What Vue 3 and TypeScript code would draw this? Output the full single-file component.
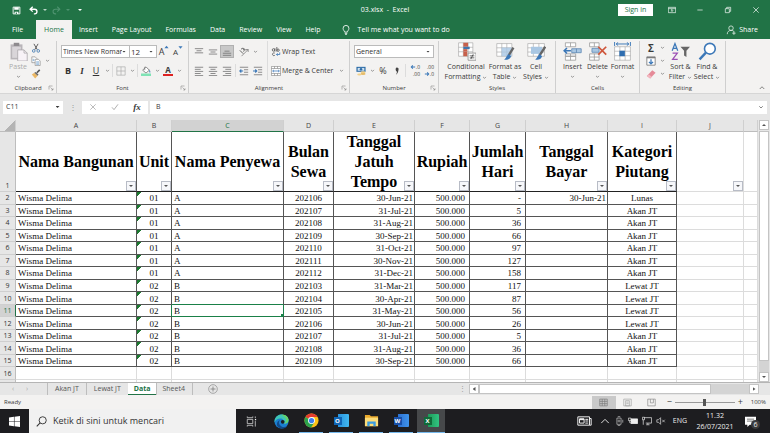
<script setup lang="ts">
import { ref } from 'vue'

interface Row { n: number; unit: string; tenant: string; month: string; due: string; days: string; paid: string; cat: string }

const raw: [string, string, string, string, string, string, string][] = [
  ['01', 'A', '202106', '30-Jun-21', '-', '30-Jun-21', 'Lunas'],
  ['01', 'A', '202107', '31-Jul-21', '5', '', 'Akan JT'],
  ['01', 'A', '202108', '31-Aug-21', '36', '', 'Akan JT'],
  ['01', 'A', '202109', '30-Sep-21', '66', '', 'Akan JT'],
  ['01', 'A', '202110', '31-Oct-21', '97', '', 'Akan JT'],
  ['01', 'A', '202111', '30-Nov-21', '127', '', 'Akan JT'],
  ['01', 'A', '202112', '31-Dec-21', '158', '', 'Akan JT'],
  ['02', 'B', '202103', '31-Mar-21', '117', '', 'Lewat JT'],
  ['02', 'B', '202104', '30-Apr-21', '87', '', 'Lewat JT'],
  ['02', 'B', '202105', '31-May-21', '56', '', 'Lewat JT'],
  ['02', 'B', '202106', '30-Jun-21', '26', '', 'Lewat JT'],
  ['02', 'B', '202107', '31-Jul-21', '5', '', 'Akan JT'],
  ['02', 'B', '202108', '31-Aug-21', '36', '', 'Akan JT'],
  ['02', 'B', '202109', '30-Sep-21', '66', '', 'Akan JT'],
]
const rows: Row[] = raw.map(([unit, tenant, month, due, days, paid, cat], i) => ({ n: i + 2, unit, tenant, month, due, days, paid, cat }))
const letters = ['A', 'B', 'C', 'D', 'E', 'F', 'G', 'H', 'I', 'J']
const titles = ['Nama Bangunan', 'Unit', 'Nama Penyewa', 'Bulan Sewa', 'Tanggal Jatuh Tempo', 'Rupiah', 'Jumlah Hari', 'Tanggal Bayar', 'Kategori Piutang', '']
const menu = ['File', 'Home', 'Insert', 'Page Layout', 'Formulas', 'Data', 'Review', 'View', 'Help']
const sheets = ['Akan JT', 'Lewat JT', 'Data', 'Sheet4']
const activeSheet = ref('Data')
const formula = ref('B')
const cellName = ref('C11')
const zoom = ref(50)

const lines = (ys: number[], a: number[][]) => ys.map((y, i) => `<path d="M${a[i][0]} ${y}H${a[i][1]}" stroke="#777" fill="none"/>`).join('')
const table = (x: number, y: number, w: number, h: number) =>
  `<path d="M${x} ${y}h${w}v${h}h${-w}zM${x + w / 3} ${y}v${h}M${x + (2 * w) / 3} ${y}v${h}M${x} ${y + h / 3}h${w}M${x} ${y + (2 * h) / 3}h${w}" fill="#fff" stroke="#999" stroke-width=".7"/>`

const icons: Record<string, string> = {
  save: '<path d="M1.5 1.5h9v9h-9z" fill="none" stroke="#fff" stroke-width="1.2"/><path d="M3 1.5h6v3.5H3zM3.5 7.5h5v3h-5z" fill="#fff"/><path d="M5 8.5h1.5v2H5z" fill="#217346"/>',
  undo: '<path d="M5 1L1.5 4.3L5 7.5M2 4.3h5.5a3 3 0 0 1 0 6.2H6.5" fill="none" stroke="#fff" stroke-width="1.8"/>',
  redo: '<path d="M7 1l3.5 3.3L7 7.5M10 4.3H4.5a3 3 0 0 0 0 6.2h1" fill="none" stroke="#4f9370" stroke-width="1.4"/>',
  bulb: '<path d="M4.3 8.5C4.3 7 2.5 6.3 2.5 4a3.5 3.5 0 0 1 7 0c0 2.3-1.8 3-1.8 4.5zM4.5 10h3M5 11.5h2" fill="none" stroke="#fff"/>',
  person: '<circle cx="6" cy="3.8" r="2.7" fill="none" stroke="#dcebe2"/><path d="M1.5 11c0-3 2-4.5 4.5-4.5S9 7 9.5 8M7.5 9.8h4M9.5 7.8v4" fill="none" stroke="#dcebe2"/>',
  ribbonopt: '<path d="M.5 2h11v8H.5zM.5 4h11" fill="none" stroke="#fff"/><path d="M6 9V5.5M4.3 7L6 5.3L7.7 7" fill="none" stroke="#fff"/>',
  minimize: '<path d="M2 6h8" stroke="#fff"/>',
  restore: '<path d="M2 4h6v6H2zM4 4V2h6v6H8" fill="none" stroke="#fff"/>',
  close: '<path d="M2 2l8 8M10 2l-8 8" stroke="#fff"/>',
  cut: '<path d="M3.5 1l4 7M8.5 1l-4 7" stroke="#555" fill="none" stroke-width="1.1"/><circle cx="3.3" cy="9.5" r="1.6" fill="none" stroke="#4279b0"/><circle cx="8.7" cy="9.5" r="1.6" fill="none" stroke="#4279b0"/>',
  copy: '<path d="M1 1h4l2 2v5H1z" fill="#fff" stroke="#888" stroke-width=".8"/><path d="M5 4h4l2 2v5.5H5z" fill="#fff" stroke="#888" stroke-width=".8"/><path d="M6.2 7h3.5M6.2 8.5h3.5M6.2 10h3.5M2 4h2M2 5.5h2" stroke="#4a86c0" stroke-width=".7"/>',
  brush: '<path d="M1 6.5l3-2L8 8l-3 3.5z" fill="#eab765"/><path d="M4 4.5l1.5-1L9 6.5L8 8z" fill="#666"/><path d="M7 4.5L10.5 1" stroke="#555" stroke-width="2"/>',
  borders: '<path d="M1 1h10v10H1zM6 1v10M1 6h10" fill="none" stroke="#aaa" stroke-width=".8"/>',
  fill: '<path d="M2 5l4-4l4 4l-4 3.5z" fill="#fff" stroke="#666" stroke-width=".9"/><path d="M4.5 1v4" stroke="#666" stroke-width=".8"/><path d="M10 4.5c1 1 1.6 2.5 .9 3.5c-1 0-1.2-1.5-.9-3.5z" fill="#3c78b8"/><path d="M0 9h12v3H0z" fill="#7fe3b5"/>',
  topA: lines([2, 4.5, 7], [[1, 11], [3, 9], [1, 11]]),
  midA: lines([3.5, 6, 8.5], [[1, 11], [3, 9], [1, 11]]),
  botA: lines([5, 7.5, 10], [[3, 9], [1, 11], [1, 11]]),
  left: lines([1.5, 4, 6.5, 9, 11.5], [[1, 11], [1, 8], [1, 11], [1, 8], [1, 11]]),
  center: lines([1.5, 4, 6.5, 9, 11.5], [[1, 11], [3, 9], [1, 11], [3, 9], [1, 11]]),
  right: lines([1.5, 4, 6.5, 9, 11.5], [[1, 11], [4, 11], [1, 11], [4, 11], [1, 11]]),
  orient: '<path d="M3 11L11 3M11 6V3H8" stroke="#777" fill="none" stroke-width=".9"/><path d="M1 4l4 4M2.5 2.5a1.8 1.8 0 0 1 3 3M5 1l3 3" stroke="#555" fill="none" stroke-width="1.1"/>',
  outdent: lines([1.5, 4.5, 7.5, 10.5], [[1, 11], [6, 11], [6, 11], [1, 11]]) + '<path d="M5 6H1M2.8 4.2L1 6l1.8 1.8" fill="none" stroke="#3c78b8" stroke-width="1.3"/>',
  indent: lines([1.5, 4.5, 7.5, 10.5], [[1, 11], [6, 11], [6, 11], [1, 11]]) + '<path d="M0 6h4M2.7 4.2L4.5 6L2.7 7.8" fill="none" stroke="#3c78b8" stroke-width="1.3"/>',
  wrap: '<circle cx="3" cy="3.5" r="1.5" fill="none" stroke="#555"/><path d="M4.7 1.5v4M7 0v5.5" stroke="#555"/><circle cx="8.5" cy="3.8" r="1.4" fill="none" stroke="#555"/><path d="M4.5 7.3a1.7 1.7 0 1 0 0 2.8" fill="none" stroke="#555"/><path d="M10.5 6.5v2.5H6.5M8 7.5L6.5 9L8 10.5" fill="none" stroke="#3c78b8"/>',
  merge: '<path d="M.5 .5h11v11H.5zM.5 3h11M.5 9h11M4.2 .5V3M7.8 .5V3M4.2 9v2.5M7.8 9v2.5" fill="#fff" stroke="#888" stroke-width=".8"/><path d="M2 6h8M3.5 4.7L2 6l1.5 1.3M8.5 4.7L10 6L8.5 7.3" fill="none" stroke="#3c78b8" stroke-width=".9"/>',
  money: '<path d="M.5 1h11v6H.5z" fill="#2f6ea8"/><path d="M2 2.3h8v3.4H2z" fill="#cfe0ef"/><circle cx="6" cy="4" r="1.5" fill="#2f6ea8"/><ellipse cx="8.5" cy="7.5" rx="3" ry="1.3" fill="#f3d28a"/><ellipse cx="8.5" cy="9.5" rx="3" ry="1.3" fill="#e6bd6c"/><ellipse cx="4" cy="10.3" rx="2.5" ry="1.2" fill="#f3d28a"/>',
  comma: '<path d="M4 2.5a2.3 2.3 0 1 1 4.2 1.8C8 7.5 7 10 4.5 11.5c1-1.8 1.5-3.2 1.3-4.7C4.5 6.3 3.8 4.5 4 2.5z" fill="#444"/>',
  paste: '<path d="M2 3h15v19H2z" fill="#b9b5b9"/><path d="M6 1h7v4H6z" fill="#8e8a8e"/><path d="M4 6h11v14H4z" fill="#d9d5d9"/><path d="M11 10h8l4 4v10H11z" fill="#f7f2f7" stroke="#aaa6aa"/><path d="M19 10v4h4" fill="none" stroke="#aaa6aa"/>',
  cond: table(2, 1, 18, 17) + '<path d="M8 1h6v5H8zM8 12h5v6H8z" fill="#c8604b"/><path d="M8 6h8v3H8z" fill="#3f75ad"/><path d="M8 9h5v3H8z" fill="#c8604b"/><path d="M14 14h10v9H14z" fill="#fff" stroke="#888"/><path d="M16 17.5h6M16 20h6M20.5 15.5l-3 6" stroke="#333" stroke-width=".9"/>',
  fmtTable: table(1, 2, 19, 16) + '<path d="M7 7h13v11H7z" fill="#a9c7e3" opacity=".8"/><path d="M22 7l-6 10" stroke="#666" stroke-width="3"/><path d="M16 15l3 3c-1 4-5 5-9 4c3-1 3-5 6-7z" fill="#3c78b8"/>',
  cellSt: table(1, 2, 21, 16) + '<path d="M5 6h14v9H5z" fill="#a9c7e3"/><path d="M23 6l-7 11" stroke="#666" stroke-width="3"/><path d="M16 15l3 3c-1 4-5 5-9 4c3-1 3-5 6-7z" fill="#3c78b8"/>',
  insert: '<path d="M3 1h13v5H3zM3 18h13v5H3zM9.5 1v5M9.5 18v5M3 15h13v3H3zM9.5 15v3" fill="#fff" stroke="#999"/><path d="M11 8.5h12v5H11zM17 8.5v5" fill="#a9c7e3" stroke="#5d87b3"/><path d="M10 11H2M5 7.5L1.5 11L5 14.5" fill="none" stroke="#3c78b8" stroke-width="2"/>',
  del: '<path d="M2 1h12v5H2zM2 15h12v8H2zM8 1v5M8 15v8M2 19h12" fill="#fff" stroke="#999"/><path d="M5 8h9v5H5z" fill="#a9c7e3" stroke="#5d87b3"/><path d="M13 6l10 10M23 6L13 16" stroke="#cf573c" stroke-width="2.2"/>',
  format: table(2, 6, 20, 17) + '<path d="M8 11h7v7H8z" fill="#2f6eb0"/><path d="M4 2.5h16M6.5 .5l-2.5 2l2.5 2M17.5 .5l2.5 2l-2.5 2M2 0v5M22 0v5" fill="none" stroke="#3c78b8" stroke-width="1.2"/>',
  filldown: '<path d="M1 1h10v10H1z" fill="#fff" stroke="#777"/><path d="M1 2h10" stroke="#777" stroke-width="1.5"/><path d="M6 4v5.5M3.5 7L6 9.5L8.5 7" fill="none" stroke="#3c78b8" stroke-width="1.5"/>',
  eraser: '<path d="M1 8.5L7.5 1.5L11.5 4.5L5 11.5z" fill="#e58a98"/><path d="M1 8.5l2-2.2L7 9.3L5 11.5z" fill="#f2b6bf"/>',
  sort: '<path d="M1.5 11L5 2l3.5 9M2.7 8h4.6" fill="none" stroke="#3c78b8" stroke-width="1.6"/><path d="M2 14h6l-6 8h6.5" fill="none" stroke="#9a4fb5" stroke-width="1.6"/><path d="M12 6h12l-4.5 5v8l-3-2v-6z" fill="#666"/>',
  find: '<circle cx="15" cy="8.5" r="6.8" fill="#fff" stroke="#3c78b8" stroke-width="2"/><path d="M10 13.5L2 22" stroke="#3c78b8" stroke-width="3"/>',
  decUp: '<path d="M5.5 3.5H1M2.8 1.7L1 3.5l1.8 1.8" fill="none" stroke="#3c78b8" stroke-width="1.2"/>',
  decDown: '<path d="M.5 3.5H5M3.2 1.7L5 3.5L3.2 5.3" fill="none" stroke="#3c78b8" stroke-width="1.2"/>',
  launcher: '<path d="M2 9V2h7M5 5l5 5M10 6.5V10H6.5" fill="none" stroke="#777"/>',
  cross: '<path d="M2 2l8 8M10 2l-8 8" stroke="#b0b0b0" stroke-width="1.3"/>',
  tick: '<path d="M1.5 6.5l3 3.5L10.5 2" fill="none" stroke="#b0b0b0" stroke-width="1.5"/>',
  chev: '<path d="M2.5 4.5L6 8l3.5-3.5" fill="none" stroke="#666" stroke-width="1.6"/>',
  chevUp: '<path d="M1.5 8L6 3.5L10.5 8" fill="none" stroke="#555" stroke-width="1.4"/>',
  plus: '<circle cx="6" cy="6" r="5.2" fill="none" stroke="#888" stroke-width=".8"/><path d="M6 3v6M3 6h6" stroke="#777" stroke-width=".9"/>',
  vNormal: '<path d="M1 1.5h10v9H1zM1 4.5h10M1 7.5h10M4.3 1.5v9M7.7 1.5v9" fill="none" stroke="#777" stroke-width=".9"/>',
  vPage: '<path d="M1 1.5h10v9H1zM3.5 3.5h5v7h-5zM4.5 5.5h3M4.5 7.5h3" fill="none" stroke="#999" stroke-width=".8"/>',
  vBreak: '<path d="M1 1.5h10v9H1zM4.5 1.5v5h4v-5" fill="none" stroke="#888" stroke-width=".9"/>',
  win: '<path d="M0 1.7L5.4 .9v4.800H0zM6 .8L12 0v5.700H6zM0 6.300h5.400v4.800L0 10.300zM6 6.300h6V12l-6-.8z" fill="#fff"/>',
  search: '<circle cx="7.3" cy="4.7" r="3.9" fill="none" stroke="#333"/><path d="M4.5 7.5L.8 11.3" stroke="#333" stroke-width="1.1"/>',
  taskview: '<path d="M1 4h6.5v5H1zM1 .5v1.5h6.5V.5M1 12.5V11h6.5v1.5M10.5 .5v2M10.5 6v6.5" fill="none" stroke="#ddd" stroke-width=".9"/><path d="M10 3.5h1.5v1.5H10z" fill="#fff"/>',
  edge: '<circle cx="8" cy="8" r="7.5" fill="#1b7fd0"/><path d="M.6 7C1.5 2.5 5 .5 8.3 .5c4.5 0 7.2 3 7.2 6c0 2.5-1.8 3.8-4 3.8c-1.6 0-2-.8-1.5-1.5c1-1.8-.5-4-3.3-4C4 4.8 1.5 6 .6 9z" fill="#3fc6b4"/><path d="M8.3 .5c4.5 0 7.2 3 7.2 6c0 2.5-1.8 3.8-4 3.8c3-3 1.5-7-3-9z" fill="#66d36a"/><path d="M6.5 6.5C4.5 8 5 12 8.5 13.5c2 .9 4 .3 5.5-.8c-2 3-6 3.5-9 1.8C2 12.5 2.5 8 6.5 6.5z" fill="#114a8b"/><circle cx="9.3" cy="8.3" r="2" fill="#1d1d20"/>',
  chrome: '<circle cx="8" cy="8" r="7.5" fill="#fbc116"/><path d="M8 8L1.5 4.3A7.5 7.5 0 0 1 14.5 4.3H8z" fill="#e33b2e"/><path d="M8 8L1.5 4.3A7.5 7.5 0 0 0 7.5 15.5L11.2 9.9z" fill="#2ba24c"/><circle cx="8" cy="8" r="3.7" fill="#fff"/><circle cx="8" cy="8" r="2.8" fill="#3b7ded"/>',
  explorer: '<path d="M1 2h5l1.5 1.5H15V14H1z" fill="#e9a92c"/><path d="M1 5h14v9H1z" fill="#fbdc79"/><path d="M3.5 14V9h9v5h-2.5v-2.5H6V14z" fill="#3a9be0"/>',
  news: '<path d="M1 1h14v10H1zM15 3h2v8h-2M3 3.5h5.5v5H3zM10 4h3.5M10 6h3.5M10 8.5h3.5" fill="none" stroke="#eee" stroke-width="1.2"/><path d="M3 3h5.5v2H3z" fill="#eee"/>',
  trayUp: '<path d="M1.5 8.5L6 4l4.5 4.5" fill="none" stroke="#ddd" stroke-width="1.2"/>',
  cam: '<path d="M3.5 2.5h5v7.5h-5zM4.5 .8h3M4.5 11.5h3M10.5 4.5v3.5" fill="none" stroke="#bbb" stroke-width=".9"/><circle cx="6" cy="6" r="1.2" fill="none" stroke="#bbb" stroke-width=".8"/>',
  battery: '<path d="M3.5 3.5h8v5.5h-8z" fill="#eee" stroke="#eee"/><path d="M.5 2.5h3v3h-3zM2 5.5V8h2" fill="#222" stroke="#eee" stroke-width=".8"/>',
  net: '<path d="M2.5 2h9v6.5h-7M7 8.5v2M5 10.5h4M.5 1.5h2.5v3H.5zM1.5 4.5v6" fill="none" stroke="#ddd" stroke-width=".9"/>',
  mute: '<path d="M1 4.5h2L5.5 2v8L3 7.5H1zM7.5 4.5l3 3M10.5 4.5l-3 3" fill="none" stroke="#ccc" stroke-width=".9"/>',
  note: '<path d="M0 1h14v10H6l-3 3v-3H0z" fill="#fff"/><path d="M2.5 4h9M2.5 6.5h9" stroke="#555"/>',
}
</script>

<template>
  <div class="app">
    <header class="titlebar">
      <div class="quick">
        <button aria-label="Save"><svg class="s9" viewBox="0 0 12 12" v-html="icons.save" /></button>
        <button aria-label="Undo"><svg class="s9" viewBox="0 0 12 12" v-html="icons.undo" /></button>
        <button class="mini" aria-label="Undo list"><i class="caret"></i></button>
        <button class="dim" aria-label="Redo"><svg class="s9" viewBox="0 0 12 12" v-html="icons.redo" /></button>
        <button class="mini dim" aria-label="Redo list"><i class="caret"></i></button>
        <button class="mini last" aria-label="Customize toolbar"><i class="caret"></i></button>
      </div>
      <div class="doc">03.xlsx&nbsp; - &nbsp;Excel</div>
      <div class="winctl">
        <button class="signin">Sign in</button>
        <button v-for="k in ['ribbonopt', 'minimize', 'restore', 'close']" :key="k" :aria-label="k"><svg class="s8" viewBox="0 0 12 12" v-html="icons[k]" /></button>
      </div>
    </header>

    <nav class="menu">
      <button v-for="m in menu" :key="m" :class="{ on: m === 'Home', file: m === 'File' }">{{ m }}</button>
      <button class="tell"><svg class="s10" viewBox="0 0 12 12" v-html="icons.bulb" />Tell me what you want to do</button>
      <button class="share"><svg class="s10" viewBox="0 0 12 12" v-html="icons.person" />Share</button>
    </nav>

    <section class="ribbon">
      <div class="group g-clip">
        <div class="body">
          <button class="big off"><svg class="s20" viewBox="0 0 24 24" v-html="icons.paste" /><span>Paste</span><svg class="s5" viewBox="0 0 12 12" v-html="icons.chev" /></button>
          <div class="stack">
            <div><button class="b" aria-label="Cut"><svg class="s10" viewBox="0 0 12 12" v-html="icons.cut" /></button></div>
            <div><button class="b" aria-label="Copy"><svg class="s10" viewBox="0 0 12 12" v-html="icons.copy" /></button><button class="cv" aria-label="Copy options"><svg class="s5" viewBox="0 0 12 12" v-html="icons.chev" /></button></div>
            <div><button class="b" aria-label="Format Painter"><svg class="s10" viewBox="0 0 12 12" v-html="icons.brush" /></button></div>
          </div>
        </div>
        <div class="label">Clipboard<button aria-label="Clipboard settings"><svg class="s6" viewBox="0 0 12 12" v-html="icons.launcher" /></button></div>
      </div>

      <div class="group g-font">
        <div class="body rows">
          <div class="row">
            <span class="sel font"><select aria-label="Font"><option>Times New Roman</option></select><i class="caret"></i></span>
            <span class="sel size"><select aria-label="Font size"><option>12</option></select><i class="caret"></i></span>
            <button class="b grow" aria-label="Increase font size">A<svg class="s5" viewBox="0 0 12 12"><path d="M1 8l5-6l5 6z" fill="#3c78b8" /></svg></button>
            <button class="b grow small" aria-label="Decrease font size">A<svg class="s5" viewBox="0 0 12 12"><path d="M1 3l5 6l5-6z" fill="#3c78b8" /></svg></button>
          </div>
          <div class="row">
            <button class="b txt"><b>B</b></button>
            <button class="b txt"><i>I</i></button>
            <button class="b txt"><u>U</u></button>
            <button class="cv" aria-label="Underline options"><svg class="s5" viewBox="0 0 12 12" v-html="icons.chev" /></button>
            <span class="sep"></span>
            <button class="b" aria-label="Borders"><svg class="s10" viewBox="0 0 12 12" v-html="icons.borders" /></button>
            <button class="cv" aria-label="Border options"><svg class="s5" viewBox="0 0 12 12" v-html="icons.chev" /></button>
            <span class="sep"></span>
            <button class="b" aria-label="Fill color"><svg class="s10" viewBox="0 0 12 12" v-html="icons.fill" /></button>
            <button class="cv" aria-label="Fill options"><svg class="s5" viewBox="0 0 12 12" v-html="icons.chev" /></button>
            <button class="b fc">A</button>
            <button class="cv" aria-label="Font color options"><svg class="s5" viewBox="0 0 12 12" v-html="icons.chev" /></button>
          </div>
        </div>
        <div class="label">Font<button aria-label="Font settings"><svg class="s6" viewBox="0 0 12 12" v-html="icons.launcher" /></button></div>
      </div>

      <div class="group g-align">
        <div class="body">
          <div class="rows alignleft">
            <div class="row">
              <button class="b" aria-label="Top align"><svg class="s10" viewBox="0 0 12 12" v-html="icons.topA" /></button>
              <button class="b" aria-label="Middle align"><svg class="s10" viewBox="0 0 12 12" v-html="icons.midA" /></button>
              <button class="b sel-on" aria-label="Bottom align"><svg class="s10" viewBox="0 0 12 12" v-html="icons.botA" /></button>
              <span class="sep clear"></span>
              <button class="b" aria-label="Orientation"><svg class="s10" viewBox="0 0 12 12" v-html="icons.orient" /></button>
              <button class="cv" aria-label="Orientation options"><svg class="s5" viewBox="0 0 12 12" v-html="icons.chev" /></button>
            </div>
            <div class="row">
              <button v-for="k in ['left', 'center', 'right']" :key="k" class="b" :aria-label="k"><svg class="s10" viewBox="0 0 12 12" v-html="icons[k]" /></button>
              <span class="sep"></span>
              <button v-for="k in ['outdent', 'indent']" :key="k" class="b" :aria-label="k"><svg class="s10" viewBox="0 0 12 12" v-html="icons[k]" /></button>
            </div>
          </div>
          <div class="rows alignright">
            <div class="row"><button class="lab"><svg class="s10" viewBox="0 0 12 12" v-html="icons.wrap" />Wrap Text</button></div>
            <div class="row"><button class="lab"><svg class="s10" viewBox="0 0 12 12" v-html="icons.merge" />Merge &amp; Center</button><button class="cv" aria-label="Merge options"><svg class="s5" viewBox="0 0 12 12" v-html="icons.chev" /></button></div>
          </div>
        </div>
        <div class="label">Alignment<button aria-label="Alignment settings"><svg class="s6" viewBox="0 0 12 12" v-html="icons.launcher" /></button></div>
      </div>

      <div class="group g-num">
        <div class="body rows">
          <div class="row"><span class="sel general"><select aria-label="Number format"><option>General</option></select><i class="caret"></i></span></div>
          <div class="row">
            <button class="b" aria-label="Accounting format"><svg class="s10" viewBox="0 0 12 12" v-html="icons.money" /></button>
            <button class="cv" aria-label="Currency options"><svg class="s5" viewBox="0 0 12 12" v-html="icons.chev" /></button>
            <button class="b pct">%</button>
            <button class="b" aria-label="Comma style"><svg class="s8" viewBox="0 0 12 12" v-html="icons.comma" /></button>
            <span class="sep"></span>
            <button class="dec"><span><svg class="s6" viewBox="0 0 6 7" v-html="icons.decUp" />.0</span><span>.00</span></button>
            <button class="dec"><span>.00</span><span><svg class="s6" viewBox="0 0 6 7" v-html="icons.decDown" />.0</span></button>
          </div>
        </div>
        <div class="label">Number<button aria-label="Number settings"><svg class="s6" viewBox="0 0 12 12" v-html="icons.launcher" /></button></div>
      </div>

      <div class="group g-styles">
        <div class="body">
          <button class="big w44"><svg class="s20" viewBox="0 0 24 24" v-html="icons.cond" /><span>Conditional</span><span>Formatting <svg class="s5" viewBox="0 0 12 12" v-html="icons.chev" /></span></button>
          <button class="big w34"><svg class="s20" viewBox="0 0 24 24" v-html="icons.fmtTable" /><span>Format as</span><span>Table <svg class="s5" viewBox="0 0 12 12" v-html="icons.chev" /></span></button>
          <button class="big w28"><svg class="s20" viewBox="0 0 24 24" v-html="icons.cellSt" /><span>Cell</span><span>Styles <svg class="s5" viewBox="0 0 12 12" v-html="icons.chev" /></span></button>
        </div>
        <div class="label">Styles</div>
      </div>

      <div class="group g-cells">
        <div class="body">
          <button class="big w25"><svg class="s20" viewBox="0 0 24 24" v-html="icons.insert" /><span>Insert</span><svg class="s5" viewBox="0 0 12 12" v-html="icons.chev" /></button>
          <button class="big w25"><svg class="s20" viewBox="0 0 24 24" v-html="icons.del" /><span>Delete</span><svg class="s5" viewBox="0 0 12 12" v-html="icons.chev" /></button>
          <button class="big w25"><svg class="s20" viewBox="0 0 24 24" v-html="icons.format" /><span>Format</span><svg class="s5" viewBox="0 0 12 12" v-html="icons.chev" /></button>
        </div>
        <div class="label">Cells</div>
      </div>

      <div class="group g-edit">
        <div class="body">
          <div class="stack">
            <div><button class="b sigma">Σ</button><button class="cv" aria-label="Sum options"><svg class="s5" viewBox="0 0 12 12" v-html="icons.chev" /></button></div>
            <div><button class="b" aria-label="Fill"><svg class="s10" viewBox="0 0 12 12" v-html="icons.filldown" /></button><button class="cv" aria-label="Fill options"><svg class="s5" viewBox="0 0 12 12" v-html="icons.chev" /></button></div>
            <div><button class="b" aria-label="Clear"><svg class="s10" viewBox="0 0 12 12" v-html="icons.eraser" /></button><button class="cv" aria-label="Clear options"><svg class="s5" viewBox="0 0 12 12" v-html="icons.chev" /></button></div>
          </div>
          <button class="big w25"><svg class="s20" viewBox="0 0 24 24" v-html="icons.sort" /><span>Sort &amp;</span><span>Filter <svg class="s5" viewBox="0 0 12 12" v-html="icons.chev" /></span></button>
          <button class="big w28"><svg class="s20" viewBox="0 0 24 24" v-html="icons.find" /><span>Find &amp;</span><span>Select <svg class="s5" viewBox="0 0 12 12" v-html="icons.chev" /></span></button>
        </div>
        <div class="label">Editing</div>
      </div>
      <button class="collapse" aria-label="Collapse ribbon"><svg class="s6" viewBox="0 0 12 12" v-html="icons.chevUp" /></button>
    </section>

    <section class="fbar">
      <span class="namebox"><input v-model="cellName" aria-label="Name box" /><button aria-label="Named ranges"><i class="caret"></i></button></span>
      <span class="dots">⋮</span>
      <span class="fbtns">
        <button aria-label="Cancel"><svg class="s8" viewBox="0 0 12 12" v-html="icons.cross" /></button>
        <button aria-label="Enter"><svg class="s8" viewBox="0 0 12 12" v-html="icons.tick" /></button>
        <button class="fx"><i>fx</i></button>
      </span>
      <span class="finput"><input v-model="formula" aria-label="Formula" /><button aria-label="Expand formula bar"><svg class="s6" viewBox="0 0 12 12" v-html="icons.chev" /></button></span>
    </section>

    <main class="work">
      <div class="grid">
        <table>
          <colgroup>
            <col class="c0" /><col v-for="l in letters" :key="l" :class="'c' + l" /><col />
          </colgroup>
          <thead>
            <tr class="letters">
              <th class="corner"></th>
              <th v-for="l in letters" :key="l" :class="{ cur: l === 'C' }">{{ l }}</th>
              <th></th>
            </tr>
          </thead>
          <tbody>
            <tr class="heads">
              <th class="rn">1</th>
              <td v-for="(t, i) in titles" :key="i" :class="{ plain: !t }">
                <div class="hc"><span>{{ t }}</span><button class="filter" aria-label="Filter"></button></div>
              </td>
              <td class="plain"></td>
            </tr>
            <tr v-for="r in rows" :key="r.n" class="data">
              <th class="rn" :class="{ cur: r.n === 11 }">{{ r.n }}</th>
              <td>Wisma Delima</td>
              <td class="c unit" :class="{ before: r.n === 11 }">{{ r.unit }}</td>
              <td :class="{ active: r.n === 11, above: r.n === 10 }">{{ r.tenant }}</td>
              <td class="c">{{ r.month }}</td>
              <td class="r">{{ r.due }}</td>
              <td class="r num">500.000</td>
              <td class="r num">{{ r.days }}</td>
              <td class="r">{{ r.paid }}</td>
              <td class="c">{{ r.cat }}</td>
              <td class="plain"></td>
              <td class="plain"></td>
            </tr>
            <tr class="data"><th class="rn">16</th><td v-for="i in 11" :key="i" class="plain"></td></tr>
            <tr class="rest"><th class="rn"></th><td v-for="i in 11" :key="i" class="plain"></td></tr>
          </tbody>
        </table>
      </div>
      <div class="vscroll"><button aria-label="Scroll up"><i class="caret up"></i></button><div class="thumb"></div><div class="track"></div><button aria-label="Scroll down"><i class="caret"></i></button></div>
    </main>

    <section class="tabs">
      <div class="nav"><button aria-label="Previous sheet">‹</button><button aria-label="Next sheet">›</button></div>
      <button v-for="s in sheets" :key="s" class="sheet" :class="{ on: s === activeSheet }" @click="activeSheet = s">{{ s }}</button>
      <button class="add" aria-label="New sheet"><svg class="s10" viewBox="0 0 12 12" v-html="icons.plus" /></button>
      <div class="hscroll"><span class="grip">⋮</span><button aria-label="Scroll left"><i class="caret lt"></i></button><div class="thumb"></div><div class="track"></div><button aria-label="Scroll right"><i class="caret rt"></i></button></div>
    </section>

    <footer class="status">
      <span class="ready">Ready</span>
      <button class="view on" aria-label="Normal view"><svg class="s9" viewBox="0 0 12 12" v-html="icons.vNormal" /></button>
      <button class="view" aria-label="Page layout view"><svg class="s9" viewBox="0 0 12 12" v-html="icons.vPage" /></button>
      <button class="view" aria-label="Page break view"><svg class="s9" viewBox="0 0 12 12" v-html="icons.vBreak" /></button>
      <button class="zb">−</button>
      <input v-model.number="zoom" type="range" min="0" max="100" aria-label="Zoom" />
      <button class="zb">+</button>
      <span class="pct">100%</span>
    </footer>

    <nav class="taskbar">
      <button class="start" aria-label="Start"><svg class="s11" viewBox="0 0 12 12" v-html="icons.win" /></button>
      <label class="find"><svg class="s11" viewBox="0 0 12 12" v-html="icons.search" /><input type="text" placeholder="Ketik di sini untuk mencari" aria-label="Ketik di sini untuk mencari" /></label>
      <button class="task" aria-label="Task view"><svg class="s11" viewBox="0 0 12 13" v-html="icons.taskview" /></button>
      <button class="task" aria-label="Edge"><svg class="s15" viewBox="0 0 16 16" v-html="icons.edge" /></button>
      <button class="task run" aria-label="Chrome"><svg class="s15" viewBox="0 0 16 16" v-html="icons.chrome" /></button>
      <button class="task run"><span class="office outlook"><b>O</b></span></button>
      <button class="task run" aria-label="File Explorer"><svg class="s15" viewBox="0 0 16 16" v-html="icons.explorer" /></button>
      <button class="task run"><span class="office word"><b>W</b></span></button>
      <button class="task run now"><span class="office excel"><b>X</b></span></button>
      <div class="tray">
        <button class="news" aria-label="News"><svg viewBox="0 0 18 12" v-html="icons.news" /></button>
        <button v-for="k in ['trayUp', 'cam', 'battery', 'net', 'mute']" :key="k" class="ti" :aria-label="k"><svg class="s10" viewBox="0 0 12 12" v-html="icons[k]" /></button>
        <span class="lang">ENG</span>
        <time class="clock"><span>11.32</span><span>26/07/2021</span></time>
        <button class="note" aria-label="Notifications"><svg class="s11" viewBox="0 0 14 14" v-html="icons.note" /><span class="badge">6</span></button>
      </div>
    </nav>
  </div>
</template>

<style>
body { margin: 0; }
</style>

<style scoped>
* { box-sizing: border-box; }
.app { display: flex; flex-direction: column; height: 100vh; min-height: 300px; overflow: hidden; background: #e6e6e6; color: #3a3a3a; font: 7px/10px "Open Sans", "Noto Sans", sans-serif; white-space: nowrap; }
button, input, select { margin: 0; padding: 0; border: 0; background: none; color: inherit; font: inherit; border-radius: 0; outline: 0; }
button { display: flex; align-items: center; justify-content: center; flex: none; }
svg { display: block; flex: none; }
.s5 { width: 5px; height: 5px; }
.s6 { width: 6px; height: 6px; }
.s8 { width: 8px; height: 8px; }
.s9 { width: 9px; height: 9px; }
.s10 { width: 10px; height: 10px; }
.s11 { width: 11px; height: 11px; }
.s15 { width: 15px; height: 15px; }
.s20 { width: 19px; height: 19px; }
.caret { flex: none; width: 4px; height: 2px; background: currentColor; clip-path: polygon(0 0, 100% 0, 50% 100%); }
.caret.up { clip-path: polygon(50% 0, 100% 100%, 0 100%); }
.caret.lt, .caret.rt { width: 3px; height: 4px; }
.caret.lt { clip-path: polygon(100% 0, 100% 100%, 0 50%); }
.caret.rt { clip-path: polygon(0 0, 100% 50%, 0 100%); }

.titlebar { display: grid; grid-template-columns: 1fr auto 1fr; align-items: center; height: 20px; background: #217346; color: #fff; }
.quick { display: flex; align-items: center; padding-left: 8px; }
.quick button { width: 17px; }
.quick .mini { width: 6px; color: #b9d6c6; }
.quick .mini.dim { color: #4f9370; }
.quick .mini.last { margin-left: 6px; color: #fff; }
.winctl { display: flex; align-items: center; justify-content: flex-end; }
.winctl button { width: 28px; height: 20px; }
.winctl .signin { width: 35px; height: 12px; margin-right: 5px; background: #fff; color: #217346; }

.menu { display: flex; height: 19px; background: #217346; color: #fff; }
.menu button { padding: 0 7px; }
.menu .file { padding: 0 13px 0 12px; }
.menu .on { padding: 0 8px; background: #f3f2f1; color: #217346; }
.menu .tell { gap: 7px; margin-left: 6px; }
.menu .share { gap: 3px; margin-left: auto; padding-right: 12px; }

.ribbon { display: flex; height: 55px; background: #f3f2f1; border-bottom: 1px solid #d6d6d6; }
.group { display: flex; flex-direction: column; flex: none; border-right: 1px solid #cfcfcf; margin-top: 2px; }
.body { display: flex; flex: 1; min-height: 0; }
.label { display: grid; grid-template-columns: 1fr auto 1fr; flex: none; height: 10px; align-items: center; font-size: 6px; line-height: 10px; }
.label::before { content: ""; }
.label button { justify-self: end; margin-right: 2px; }
.g-clip { width: 57px; }
.g-font { width: 132px; }
.g-align { width: 161px; }
.g-num { width: 89px; }
.g-styles { width: 117px; }
.g-cells { width: 84px; }
.g-edit { width: 86px; }
.b { width: 14px; height: 13px; }
.cv { width: 8px; height: 13px; }
.big { display: flex; flex-direction: column; justify-content: flex-start; padding-top: 1px; line-height: 10px; }
.big svg.s20 { margin-bottom: 1px; }
.big > span { display: flex; align-items: center; gap: 2px; }
.big > svg.s5 { margin-top: 2px; }
.big.off { width: 22px; color: #aaa; }
.w44 { width: 44px; }
.w34 { width: 34px; }
.w28 { width: 28px; }
.w25 { width: 25px; }
.g-clip .body { padding-left: 7px; }
.g-styles .body { padding-left: 5px; }
.g-cells .body { padding-left: 4px; }
.g-edit .body { padding-left: 4px; }
.stack { display: flex; flex-direction: column; width: 24px; }
.stack > div { display: flex; height: 13px; align-items: center; }
.g-clip .stack { width: 26px; }
.rows { display: flex; flex-direction: column; gap: 6px; padding-top: 4px; }
.row { display: flex; height: 13px; align-items: center; }
.g-font .rows { padding-left: 4px; }
.g-align .body { padding-left: 3px; }
.g-num .rows { padding-left: 4px; }
.alignleft { width: 75px; }
.alignright { padding-left: 3px; border-left: 1px solid #dcdcdc; margin-bottom: 3px; }
.lab { gap: 1px; }
.alignright .cv { margin-left: 4px; }
.sep { width: 1px; height: 13px; margin: 0 1px; background: #dcdcdc; }
.sep.clear { background: none; }
.sel { display: flex; height: 13px; align-items: center; padding-right: 3px; background: #fff; border: 1px solid #bbb; }
.sel select { appearance: none; flex: 1; min-width: 0; height: 11px; padding-left: 1px; overflow: hidden; text-overflow: clip; line-height: 11px; color: #333; }
.sel.font { width: 69px; }
.sel.size { width: 27px; border-left: 0; }
.sel.size select { font-size: 8px; }
.sel.general { width: 80px; }
.grow { font-size: 9px; }
.grow svg { align-self: flex-start; }
.grow.small { font-size: 8px; }
.txt { font-size: 9px; color: #333; }
.txt i { font-family: "Liberation Serif", serif; font-weight: bold; }
.fc { align-items: flex-start; width: 10px; height: 11px; margin: 0 2px; border-bottom: 2px solid #d22; font-size: 8px; font-weight: bold; line-height: 9px; }
.sel-on { background: #c8c8c8; outline: 1px solid #b0b0b0; outline-offset: -1px; }
.pct { font-size: 9px; }
.dec { flex-direction: column; width: 14px; font-size: 5px; line-height: 7px; }
.dec span { display: flex; width: 12px; align-items: center; justify-content: flex-end; }
.sigma { font-size: 10px; font-weight: bold; }
.collapse { margin: auto 5px 2px auto; }

.fbar { display: flex; height: 26px; align-items: center; padding: 0 3px; font-size: 8px; }
.fbar button { width: 22px; height: 13px; }
.namebox, .fbtns, .finput { display: flex; height: 13px; background: #fff; align-items: center; }
.namebox { width: 60px; }
.namebox input { flex: 1; min-width: 0; padding-left: 3px; font-size: 7px; }
.fbar .namebox button { width: 11px; }
.dots { width: 19px; text-align: center; color: #999; }
.fbtns { width: 66px; }
.fx { font-family: "Liberation Serif", serif; font-size: 9px; font-weight: bold; }
.finput { flex: 1; margin-left: 2px; }
.finput input { flex: 1; min-width: 0; padding-left: 6px; font-size: 7px; }
.fbar .finput button { width: 12px; }

.work { display: flex; flex: 1; min-height: 0; }
.grid { flex: 1; min-width: 0; overflow: hidden; }
table { width: 100%; height: 100%; table-layout: fixed; border-collapse: separate; border-spacing: 0; background: #fff; color: #111; font: 9px/10px "Liberation Serif", serif; }
.c0 { width: 16px; }
.cA { width: 121px; }
.cB { width: 35px; }
.cC { width: 112px; }
.cD { width: 50px; }
.cE { width: 81px; }
.cF { width: 55px; }
.cG { width: 56px; }
.cH { width: 82px; }
.cI { width: 69px; }
.cJ { width: 67px; }
th, td { padding: 0; overflow: hidden; }
.letters th { height: 12px; background: #e6e6e6; border-right: 1px solid #cfcfcf; border-bottom: 1px solid #bdbdbd; color: #444; font: 7px/11px "Open Sans", sans-serif; }
.letters .cur { background: #d2d2d2; border-bottom-color: #217346; color: #217346; }
.letters .corner { background: linear-gradient(135deg, #e6e6e6 60%, #b4b4b4 60%); }
.rn { background: #e6e6e6; border-right: 1px solid #bdbdbd; border-bottom: 1px solid #cfcfcf; color: #333; font: 7px/10px "Open Sans", sans-serif; text-align: center; }
.rn.cur { background: #d2d2d2; border-right-color: #217346; color: #217346; }
td { border-right: 1px solid #555; border-bottom: 1px solid #555; padding-left: 2px; }
.data th, .data td { padding-top: 1px; }
td.c { text-align: center; padding-left: 0; }
td.r { text-align: right; padding-right: 1px; }
td.num { padding-right: 4px; }
td.plain { border-color: #dcdcdc; }
td.above { border-bottom-color: #1a8048; }
td.before { border-right-color: #1a8048; }
td.active { border-color: #1a8048; background: linear-gradient(#1a8048, #1a8048) right bottom / 2px 2px no-repeat; }
.heads td, .heads th { height: 60px; padding: 0; }
.heads td { border-bottom-color: #222; }
.heads td.plain { border-bottom-color: #dcdcdc; }
.heads .rn { vertical-align: bottom; }
.hc { position: relative; display: flex; align-items: center; justify-content: center; height: 59px; color: #000; font: bold 16px/20px "Liberation Serif", serif; text-align: center; white-space: normal; }
.filter { position: absolute; right: 0; bottom: 0; width: 10px; height: 10px; background: #f6f7fa; border: 1px solid #b8bcc6; }
.filter::after { content: ""; border: 2px solid transparent; border-top-color: #555; border-bottom: 0; }
.unit { background: linear-gradient(135deg, #1c7a30 3px, transparent 3px) no-repeat; }
.rest th, .rest td { height: 2px; border-bottom: 0; }

.vscroll { display: flex; flex-direction: column; width: 12px; padding: 0 1px; }
.vscroll button, .hscroll button { width: 10px; height: 10px; background: #fff; border: 1px solid #c4c4c4; color: #555; }
.thumb { background: #fff; border: 1px solid #c4c4c4; }
.vscroll .thumb { flex: 20; margin-top: 1px; }
.vscroll .track { flex: 1; background: #d4d4d4; }

.tabs { display: flex; height: 13px; border-top: 1px solid #b5b5b5; background: #e6e6e6; align-items: stretch; }
.nav { display: flex; width: 47px; padding-left: 6px; color: #aaa; }
.nav button { width: 14px; }
.sheet { padding: 0 7px; border-left: 1px solid #bdbdbd; color: #555; }
.sheet.on { padding: 0 6px; border-left: 0; background: #fff; border-bottom: 1px solid #217346; color: #217346; font-weight: bold; }
.sheet.on + .sheet { padding: 0 7px 0 5px; border-right: 1px solid #bdbdbd; }
.add { margin-left: 15px; }
.hscroll { display: flex; width: 314px; margin-left: auto; padding-right: 11px; align-items: center; }
.grip { width: 13px; padding-left: 3px; color: #999; }
.hscroll .thumb { flex: 6; height: 10px; }
.hscroll .track { flex: 1; height: 10px; background: #d4d4d4; }

.status { display: flex; height: 14px; align-items: center; background: #f3f2f1; font-size: 6px; }
.ready { flex: 1; padding-left: 4px; }
.view { width: 24px; height: 13px; }
.view.on { background: #c9c9c9; }
.zb { width: 11px; font-size: 9px; }
.status input { appearance: none; width: 60px; height: 9px; background: linear-gradient(#999, #999) center / 100% 1px no-repeat; }
.status input::-webkit-slider-thumb { appearance: none; width: 3px; height: 7px; background: #555; }
.status > span:last-child { padding: 0 4px 0 5px; font-size: 6px; }

.taskbar { display: flex; height: 24px; background: #1d1d20; color: #eee; }
.start { width: 29px; }
.find { display: flex; flex: 0 1 207px; align-items: center; gap: 6px; padding-left: 7px; background: #f1f1f1; }
.find input { flex: 1; min-width: 0; font-size: 9px; line-height: 14px; color: #333; }
.find input::placeholder { color: #333; opacity: 1; }
.task { width: 30px; }
.run { width: 24px; margin: 0 3px; border-bottom: 1px solid #76b9ed; }
.now { width: 28px; margin: 0 1px; background: #46484a; }
.office { display: flex; align-items: center; width: 15px; height: 13px; border-radius: 1px; }
.office b { width: 8px; height: 8px; font-size: 6px; line-height: 8px; color: #fff; text-align: center; }
.outlook { background: linear-gradient(90deg, transparent 30%, #2a93dd 30%, #41b8f0); }
.outlook b { background: #0f64b5; }
.word { background: linear-gradient(90deg, transparent 25%, #2b6fd0 25%, #3f93ea); }
.word b { background: #174fa8; }
.excel { background: linear-gradient(90deg, transparent 25%, #1d9a58 25%, #31c481); }
.excel b { background: #0f6b39; }
.tray { display: flex; align-items: center; margin-left: auto; }
.news { width: 27px; }
.news svg { width: 15px; height: 10px; }
.ti { width: 14px; }
.lang { padding: 0 7px 0 5px; }
.clock { display: flex; flex-direction: column; align-items: center; width: 42px; line-height: 11px; }
.note { position: relative; width: 34px; height: 24px; padding-right: 6px; }
.badge { position: absolute; left: 15px; top: 11px; width: 9px; height: 9px; border-radius: 50%; background: #3a3a3c; font-size: 7px; line-height: 9px; text-align: center; }
</style>
